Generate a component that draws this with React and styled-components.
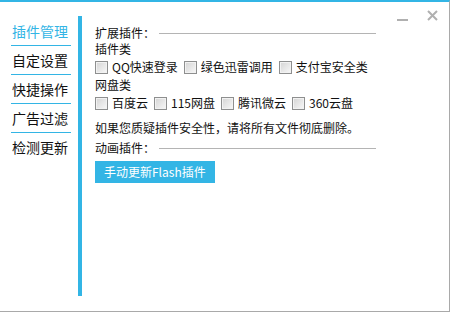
import React from "react";
import styled, { createGlobalStyle } from "styled-components";

const BLUE = "#33b5e5";

const Global = createGlobalStyle`
  html, body { margin: 0; padding: 0; background: #fff; }
  body { font-family: "Noto Sans CJK SC", "Noto Sans", sans-serif; }
`;

const Window = styled.div`
  position: relative;
  box-sizing: border-box;
  width: 450px;
  height: 312px;
  border-top: 2px solid ${BLUE};
  border-right: 1px solid #a9a9a9;
  border-bottom: 1px solid #a9a9a9;
  background: #fff;
  display: flex;
  align-items: flex-start;
  overflow: hidden;
`;

const Controls = styled.div`
  position: absolute;
  top: 8px;
  right: 11px;
  display: flex;
  align-items: center;
  gap: 19px;
`;

const CtrlBtn = styled.svg`
  display: block;
  width: 11px;
  height: 11px;
`;

const Sidebar = styled.nav`
  width: 78px;
  flex: none;
  box-sizing: border-box;
  padding: 15px 0 0 11px;
  display: flex;
  flex-direction: column;
`;

const NavItem = styled.div`
  width: 60px;
  box-sizing: border-box;
  padding: 4px 0 3px 1px;
  line-height: 21px;
  font-size: 14px;
  color: ${(p) => (p.$active ? BLUE : "#111")};
  border-bottom: ${(p) => (p.$last ? "none" : `1px solid ${BLUE}`)};
  white-space: nowrap;
`;

const Bar = styled.div`
  width: 4px;
  height: 280px;
  margin-top: 14px;
  flex: none;
  background: ${BLUE};
`;

const Content = styled.div`
  flex: 1;
  box-sizing: border-box;
  padding: 23px 73px 0 13px;
  font-size: 12px;
  color: #111;
  display: flex;
  flex-direction: column;
  align-items: flex-start;
`;

const SectionHead = styled.div`
  align-self: stretch;
  display: flex;
  align-items: center;
  line-height: 16px;
  margin-top: ${(p) => p.$mt || 0}px;
  white-space: nowrap;
  &::after {
    content: "";
    flex: 1;
    height: 1px;
    margin-left: 4px;
    background: #b4b4b4;
  }
`;

const Label = styled.div`
  line-height: 16px;
  margin-top: ${(p) => p.$mt || 0}px;
  white-space: nowrap;
`;

const CheckRow = styled.div`
  display: flex;
  align-items: center;
  height: 20px;
  gap: 6px;
  white-space: nowrap;
`;

const CheckItem = styled.label`
  display: flex;
  align-items: center;
  gap: 4px;
  line-height: 16px;
`;

const Box = styled.span`
  display: block;
  box-sizing: border-box;
  width: 13px;
  height: 13px;
  border: 1px solid #8e8f8f;
  background: linear-gradient(135deg, #d4d4d4 0%, #e6e6e6 50%, #f8f8f8 100%);
  box-shadow: inset 0 0 0 1px #f2f2f2;
`;

const Button = styled.button`
  margin-top: 5px;
  height: 22px;
  padding: 0 9px;
  border: none;
  background: ${BLUE};
  color: #fff;
  font-family: inherit;
  font-size: 12px;
  line-height: 22px;
  cursor: pointer;
  white-space: nowrap;
`;

const Check = ({ children }) => (
  <CheckItem>
    <Box />
    <span>{children}</span>
  </CheckItem>
);

const navItems = ["插件管理", "自定设置", "快捷操作", "广告过滤", "检测更新"];

export default function App() {
  return (
    <>
      <Global />
      <Window>
        <Sidebar>
          {navItems.map((t, i) => (
            <NavItem key={t} $active={i === 0} $last={i === navItems.length - 1}>
              {t}
            </NavItem>
          ))}
        </Sidebar>
        <Bar />
        <Content>
          <SectionHead>扩展插件：</SectionHead>
          <Label>插件类</Label>
          <CheckRow>
            <Check>QQ快速登录</Check>
            <Check>绿色迅雷调用</Check>
            <Check>支付宝安全类</Check>
          </CheckRow>
          <Label>网盘类</Label>
          <CheckRow>
            <Check>百度云</Check>
            <Check>115网盘</Check>
            <Check>腾讯微云</Check>
            <Check>360云盘</Check>
          </CheckRow>
          <Label $mt={7}>如果您质疑插件安全性，请将所有文件彻底删除。</Label>
          <SectionHead $mt={4}>动画插件：</SectionHead>
          <Button>手动更新Flash插件</Button>
        </Content>
        <Controls>
          <CtrlBtn viewBox="0 0 11 11">
            <rect x="0" y="9" width="11" height="2" fill="#b0b0b0" />
          </CtrlBtn>
          <CtrlBtn viewBox="0 0 11 11">
            <path d="M1 1 L10 10 M10 1 L1 10" stroke="#b0b0b0" strokeWidth="2" />
          </CtrlBtn>
        </Controls>
      </Window>
    </>
  );
}
